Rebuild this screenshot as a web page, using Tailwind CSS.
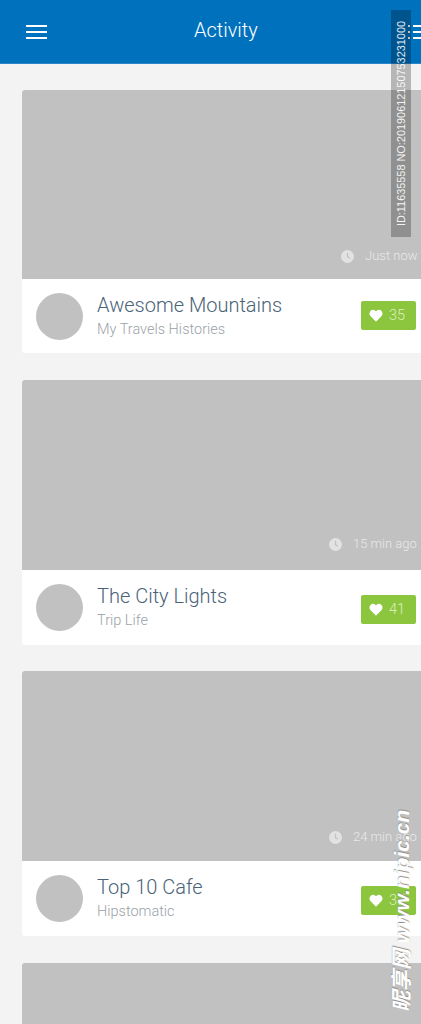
<!DOCTYPE html>
<html lang="en">
<head>
<meta charset="UTF-8">
<meta name="viewport" content="width=device-width, initial-scale=1.0">
<title>Activity</title>
<script src="https://cdn.jsdelivr.net/npm/@tailwindcss/browser@4"></script>
</head>
<body class="bg-[#f3f3f3] font-['Roboto',sans-serif]">
<div class="relative w-[421px] h-[1024px] overflow-hidden bg-[#f3f3f3]">

  <!-- header -->
  <header class="h-[64px] bg-[#0071bc] border-b border-[#2a86c8] flex items-center relative">
    <div class="ml-[26px] w-[21px] flex flex-col gap-[4px]">
      <span class="block h-[2px] bg-white"></span>
      <span class="block h-[2px] bg-white"></span>
      <span class="block h-[2px] bg-white"></span>
    </div>
    <h1 class="absolute left-[194px] top-[17px] text-[20px] leading-[26px] font-light text-white">Activity</h1>
    <div class="absolute left-[408px] top-[25px] flex flex-col gap-[4px]">
      <div class="flex gap-[3px]"><span class="w-[2px] h-[2px] bg-white"></span><span class="w-[12px] h-[2px] bg-white"></span></div>
      <div class="flex gap-[3px]"><span class="w-[2px] h-[2px] bg-white"></span><span class="w-[12px] h-[2px] bg-white"></span></div>
      <div class="flex gap-[3px]"><span class="w-[2px] h-[2px] bg-white"></span><span class="w-[12px] h-[2px] bg-white"></span></div>
    </div>
  </header>

  <main class="pt-[26px] pl-[22px] flex flex-col w-[430px]">

    <!-- card 1 -->
    <article class="rounded-[3px] overflow-hidden bg-white">
      <div class="h-[189px] bg-[#c1c1c1] relative">
        <div class="absolute left-[319px] top-[158px] flex items-center gap-[11px] text-[13px] leading-[16px] font-light text-[#e9e9e9] whitespace-nowrap">
          <svg class="w-[13px] h-[13px]" viewBox="0 0 14 14"><circle cx="7" cy="7" r="7" fill="#e2e2e2"/><path d="M7 3v4.2l2.6 1.8" fill="none" stroke="#c1c1c1" stroke-width="1.3"/></svg>
          <span>Just now</span>
        </div>
      </div>
      <div class="h-[74px] flex items-center pl-[14px] relative">
        <div class="w-[47px] h-[47px] rounded-full bg-[#c1c1c1]"></div>
        <div class="ml-[14px] -mt-[1px]">
          <p class="text-[20px] leading-[26px] font-light text-[#4a6378]">Awesome Mountains</p>
          <p class="mt-[2px] text-[14.5px] leading-[20px] font-light text-[#9aa2a8]">My Travels Histories</p>
        </div>
        <div class="absolute left-[339px] top-[22px] w-[55px] h-[29px] rounded-[2px] bg-[#8cc63f] flex items-center pl-[8px] gap-[6px] text-[14.5px] font-light text-[#dcefc0]">
          <svg class="w-[14px] h-[13px]" viewBox="0 0 24 22"><path fill="#fff" d="M12 21.5 2.8 12.2C.2 9.6.2 5.6 2.6 3.1c2.4-2.400 6.300-2.400 8.700 0l.7.800.7-.800c2.400-2.400 6.300-2.400 8.700 0 2.400 2.500 2.400 6.500-.2 9.100z"/></svg>
          <span>35</span>
        </div>
      </div>
    </article>

    <!-- card 2 -->
    <article class="mt-[27px] rounded-[3px] overflow-hidden bg-white">
      <div class="h-[190px] bg-[#c1c1c1] relative">
        <div class="absolute left-[307px] top-[156px] flex items-center gap-[11px] text-[13px] leading-[16px] font-light text-[#e9e9e9] whitespace-nowrap">
          <svg class="w-[13px] h-[13px]" viewBox="0 0 14 14"><circle cx="7" cy="7" r="7" fill="#e2e2e2"/><path d="M7 3v4.2l2.6 1.8" fill="none" stroke="#c1c1c1" stroke-width="1.3"/></svg>
          <span>15 min ago</span>
        </div>
      </div>
      <div class="h-[75px] flex items-center pl-[14px] relative">
        <div class="w-[47px] h-[47px] rounded-full bg-[#c1c1c1]"></div>
        <div class="ml-[14px] -mt-[2px]">
          <p class="text-[20px] leading-[26px] font-light text-[#4a6378]">The City Lights</p>
          <p class="mt-[2px] text-[14.5px] leading-[20px] font-light text-[#9aa2a8]">Trip Life</p>
        </div>
        <div class="absolute left-[339px] top-[25px] w-[55px] h-[29px] rounded-[2px] bg-[#8cc63f] flex items-center pl-[8px] gap-[6px] text-[14.5px] font-light text-[#dcefc0]">
          <svg class="w-[14px] h-[13px]" viewBox="0 0 24 22"><path fill="#fff" d="M12 21.5 2.8 12.2C.2 9.6.2 5.6 2.6 3.1c2.4-2.400 6.300-2.400 8.700 0l.7.800.7-.800c2.400-2.400 6.300-2.400 8.700 0 2.400 2.500 2.400 6.500-.2 9.100z"/></svg>
          <span>41</span>
        </div>
      </div>
    </article>

    <!-- card 3 -->
    <article class="mt-[26px] rounded-[3px] overflow-hidden bg-white">
      <div class="h-[190px] bg-[#c1c1c1] relative">
        <div class="absolute left-[307px] top-[158px] flex items-center gap-[11px] text-[13px] leading-[16px] font-light text-[#e9e9e9] whitespace-nowrap">
          <svg class="w-[13px] h-[13px]" viewBox="0 0 14 14"><circle cx="7" cy="7" r="7" fill="#e2e2e2"/><path d="M7 3v4.2l2.6 1.8" fill="none" stroke="#c1c1c1" stroke-width="1.3"/></svg>
          <span>24 min ago</span>
        </div>
      </div>
      <div class="h-[75px] flex items-center pl-[14px] relative">
        <div class="w-[47px] h-[47px] rounded-full bg-[#c1c1c1]"></div>
        <div class="ml-[14px] -mt-[2px]">
          <p class="text-[20px] leading-[26px] font-light text-[#4a6378]">Top 10 Cafe</p>
          <p class="mt-[2px] text-[14.5px] leading-[20px] font-light text-[#9aa2a8]">Hipstomatic</p>
        </div>
        <div class="absolute left-[339px] top-[25px] w-[55px] h-[29px] rounded-[2px] bg-[#8cc63f] flex items-center pl-[8px] gap-[6px] text-[14.5px] font-light text-[#dcefc0]">
          <svg class="w-[14px] h-[13px]" viewBox="0 0 24 22"><path fill="#fff" d="M12 21.5 2.8 12.2C.2 9.6.2 5.6 2.6 3.1c2.4-2.400 6.300-2.400 8.700 0l.7.800.7-.800c2.400-2.400 6.300-2.400 8.700 0 2.400 2.500 2.400 6.500-.2 9.100z"/></svg>
          <span>37</span>
        </div>
      </div>
    </article>

    <!-- card 4, cut off -->
    <article class="mt-[27px] rounded-[3px] overflow-hidden bg-white">
      <div class="h-[190px] bg-[#c1c1c1]"></div>
    </article>
  </main>

  <!-- stock site stamp over the picture -->
  <div class="absolute left-[391px] top-[10px] w-[20px] h-[227px] bg-black/25 flex items-center justify-center">
    <span class="[writing-mode:vertical-rl] rotate-180 text-[10.9px] leading-[20px] whitespace-nowrap font-['Liberation_Sans',sans-serif] text-white/90">ID:11635558 NO:20190612150753231000</span>
  </div>
  <div class="absolute left-[390px] top-[812px] h-[200px] flex justify-center">
    <span class="[writing-mode:vertical-rl] [text-orientation:sideways] rotate-180 text-[21px] leading-[24px] font-bold italic whitespace-nowrap font-['Liberation_Sans','Noto_Sans_CJK_SC',sans-serif] text-white [text-shadow:1px_0_1px_#8a8a8a]">昵享网 www.nipic.cn</span>
  </div>
</div>
</body>
</html>
